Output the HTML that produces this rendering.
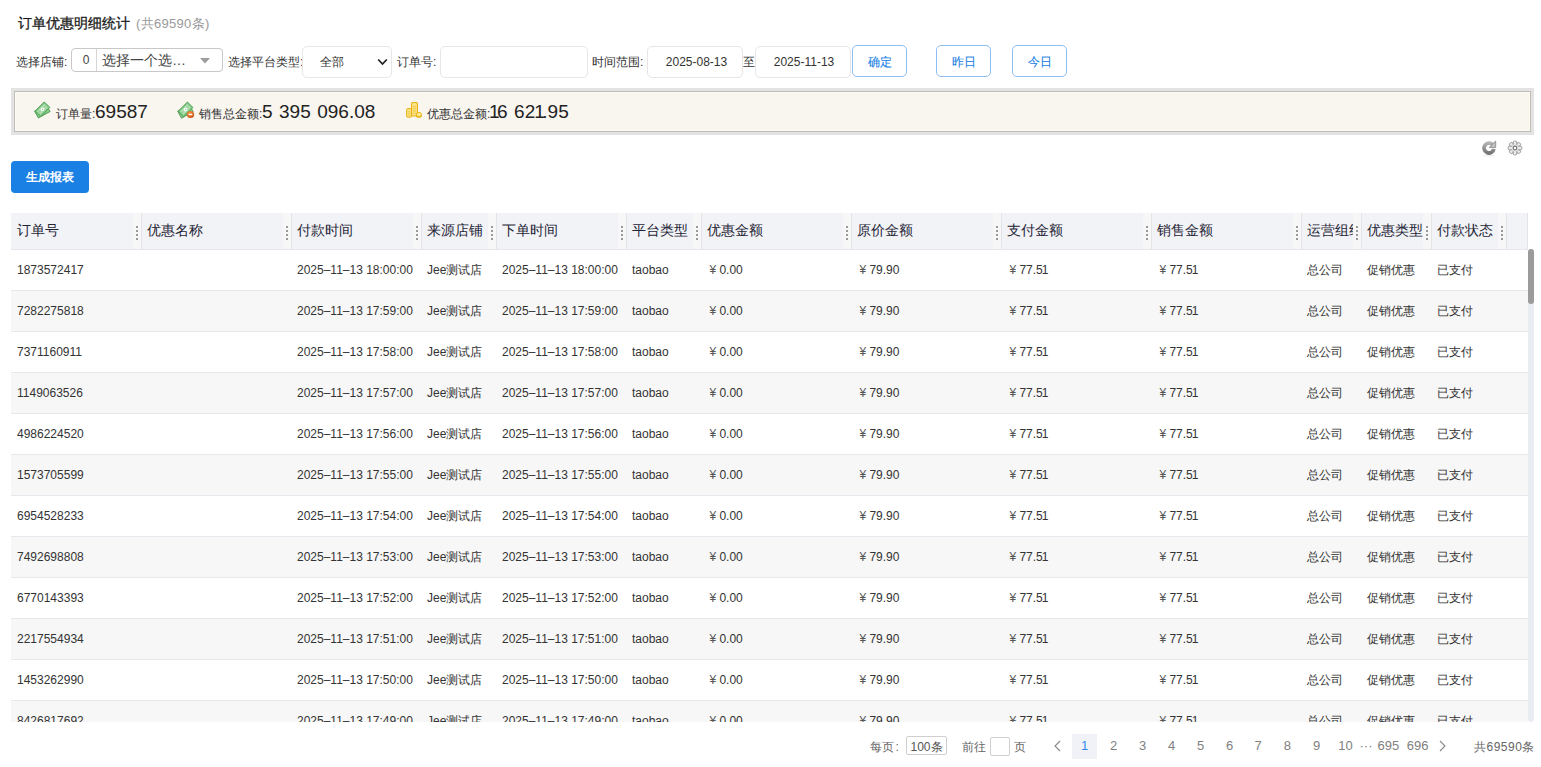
<!DOCTYPE html>
<html><head><meta charset="utf-8">
<style>
*{box-sizing:border-box;margin:0;padding:0}
html,body{width:1541px;height:767px;overflow:hidden;background:#fff}
body{position:relative;font-family:"Liberation Sans",sans-serif;color:#333;font-size:12px}
.a{position:absolute;white-space:nowrap}
.title{left:18px;top:13px;font-size:14px;font-weight:500;color:#1a1a1a;line-height:20px;-webkit-text-stroke:0.3px #1a1a1a}
.title span{font-size:13px;font-weight:normal;color:#999;margin-left:6px;-webkit-text-stroke:0;letter-spacing:0.3px}
.lbl{font-size:12px;color:#333;line-height:16px}
.box{border:1px solid #e6e6e6;border-radius:5px;background:#fff}
.btnb{border:1px solid #8ebdf0;border-radius:5px;background:#fff;color:#1a80e4;text-align:center;font-size:12px;font-weight:500;-webkit-text-stroke:0.1px #1a80e4}
.sum{left:11px;top:88px;width:1523px;height:47px;border:3px solid #e3e3e3}
.sum .i1{position:absolute;left:0;top:0;right:0;bottom:0;border:1px solid #bebcbd}
.sum .i2{position:absolute;left:0;top:0;right:0;bottom:0;border:1px solid #fffaee;background:#f9f5ef}
.sl{font-size:12px;color:#333}
.sv{font-size:19px;color:#222}
.n1{margin-left:-1px;margin-right:-2.5px}

.tbl{background:#fff}
.hd{position:absolute;left:0;top:0;width:1517px;height:37px}
.hc{position:absolute;top:0;height:37px;background:#f2f3f7;border-bottom:1px solid #e4e6eb;border-right:1px solid #e3e4e8;overflow:hidden}
.hc span{position:absolute;top:0;line-height:35px;font-size:14px;color:#1f2536;white-space:nowrap}
.hc i{position:absolute;right:0;top:0;width:8px;height:36px;background:#f7f7f8}
.hc i:before{content:"";position:absolute;left:3px;top:13px;width:2px;height:2px;background:#999;box-shadow:0 4px 0 #999,0 8px 0 #999,0 12px 0 #999}
.rw{position:absolute;left:0;width:1517px;height:41px;border-bottom:1px solid #e6e8ee;background:#fff}
.rw.odd{background:#f7f7f7}
.rw span{position:absolute;top:0;line-height:40px;font-size:12px;color:#333;white-space:nowrap}
.rw b{font-weight:normal;margin-left:2.5px;margin-right:3.2px;color:#555}
.rw s{text-decoration:none;margin-left:-1px}

.pgl{font-size:12px;line-height:16px;color:#666}
.pgn{top:733px;width:30px;text-align:center;font-size:13px;line-height:25px;color:#808080}
</style></head><body>
<div class="a title">订单优惠明细统计<span>(共69590条)</span></div>

<div class="a lbl" style="left:16px;top:54px">选择店铺:</div>
<div class="a" style="left:71px;top:48px;width:152px;height:24px;border:1px solid #c8c8c8;border-radius:4px;background:#fff"></div>

<div class="a lbl" style="left:228px;top:54px">选择平台类型:</div>
<div class="a box" style="left:302px;top:46px;width:90px;height:32px"></div>

<div class="a lbl" style="left:397px;top:54px">订单号:</div>
<div class="a box" style="left:440px;top:46px;width:148px;height:32px"></div>

<div class="a lbl" style="left:592px;top:54px">时间范围:</div>
<div class="a box" style="left:647px;top:46px;width:96px;height:32px"></div>
<div class="a lbl" style="left:743px;top:54px">至</div>
<div class="a box" style="left:755px;top:46px;width:96px;height:32px"></div>
<div class="a btnb" style="left:852px;top:45px;width:55px;height:32px;line-height:32px">确定</div>
<div class="a btnb" style="left:936px;top:45px;width:55px;height:32px;line-height:32px">昨日</div>
<div class="a btnb" style="left:1012px;top:45px;width:55px;height:32px;line-height:32px">今日</div>

<div class="a" style="left:96px;top:49px;width:1px;height:22px;background:#d6d6d6"></div>
<div class="a" style="left:73.5px;top:49px;width:25px;height:24px;line-height:22px;text-align:center;font-size:12px;color:#444">0</div>
<div class="a" style="left:102px;top:50px;font-size:14px;line-height:20px;color:#444">选择一个选…</div>
<svg class="a" style="left:200px;top:57.7px" width="10" height="6" viewBox="0 0 10 6"><path d="M0 0H10L5 5.5Z" fill="#9c9c9c"/></svg>
<div class="a" style="left:320px;top:54px;font-size:12px;line-height:16px;color:#333">全部</div>
<svg class="a" style="left:377px;top:58px" width="11" height="8" viewBox="0 0 11 8"><path d="M1.2 1.5L5.5 6L9.8 1.5" fill="none" stroke="#222" stroke-width="1.8"/></svg>
<div class="a" style="left:648.5px;top:46px;width:96px;height:32px;line-height:32px;text-align:center;font-size:12px;color:#333">2025-08-13</div>
<div class="a" style="left:756px;top:46px;width:96px;height:32px;line-height:32px;text-align:center;font-size:12px;color:#333">2025-11-13</div>

<div class="a sum"><div class="i1"><div class="i2"></div></div></div>

<svg class="a" style="left:33px;top:100px" width="20" height="20" viewBox="0 0 20 20">
<g transform="translate(9.3 11.3) rotate(-29)">
<rect x="-6.6" y="-3.9" width="13.2" height="7.8" fill="#8fcf92" stroke="#52a057" stroke-width="0.9"/>
</g>
<g transform="translate(9.4 9.3) rotate(-45)">
<rect x="-6.6" y="-3.9" width="13.2" height="7.8" fill="#7cc680" stroke="#52a057" stroke-width="0.9"/>
<rect x="-5.2" y="-2.5" width="10.4" height="5" fill="#b2e0b3"/>
<circle cx="0" cy="0" r="1.7" fill="#fff"/><circle cx="0" cy="0" r="0.6" fill="#7cc680"/>
<circle cx="-3.6" cy="0" r="0.5" fill="#5aa35e"/><circle cx="3.6" cy="0" r="0.5" fill="#5aa35e"/>
</g>
</svg>
<div class="a sl" style="left:56px;top:106px;line-height:16px">订单量:</div>
<div class="a sv" style="left:95px;top:101px;line-height:22px">69587</div>

<svg class="a" style="left:175px;top:100px" width="22" height="22" viewBox="0 0 22 22">
<g transform="translate(10.4 11.45) rotate(-29)">
<rect x="-6.6" y="-3.9" width="13.2" height="7.8" fill="#8fcf92" stroke="#52a057" stroke-width="0.9"/>
</g>
<g transform="translate(10.5 9.45) rotate(-45)">
<rect x="-6.6" y="-3.9" width="13.2" height="7.8" fill="#7cc680" stroke="#52a057" stroke-width="0.9"/>
<rect x="-5.2" y="-2.5" width="10.4" height="5" fill="#b2e0b3"/>
<circle cx="0" cy="0" r="1.7" fill="#fff"/><circle cx="0" cy="0" r="0.6" fill="#7cc680"/>
<circle cx="-3.6" cy="0" r="0.5" fill="#5aa35e"/><circle cx="3.6" cy="0" r="0.5" fill="#5aa35e"/>
</g>
<defs><radialGradient id="og" cx="0.4" cy="0.35" r="0.7"><stop offset="0" stop-color="#f7a04a"/><stop offset="1" stop-color="#c9470a"/></radialGradient></defs>
<circle cx="15.5" cy="14.5" r="3.6" fill="url(#og)"/>
<rect x="13.6" y="13.8" width="3.8" height="1.4" fill="#fff"/>
</svg>
<div class="a sl" style="left:199px;top:106px;line-height:16px">销售总金额:</div>
<div class="a sv" style="left:262px;top:101px;line-height:22px;word-spacing:1.2px">5 395 096.08</div>

<svg class="a" style="left:402px;top:99px" width="24" height="24" viewBox="0 0 24 24">
<rect x="4.1" y="9" width="6" height="9.8" rx="2.4" fill="#eab10e"/>
<rect x="5" y="10" width="4.2" height="7.8" rx="1.6" fill="#fde58a"/>
<path d="M5.6 12.8h3M5.6 14.6h3M5.6 16.3h3" stroke="#e9bb2a" stroke-width="0.6"/>
<rect x="9" y="3" width="7" height="14.4" rx="1.6" fill="#eab10e"/>
<rect x="10" y="4.1" width="5" height="12.3" rx="1" fill="#fde58a"/>
<path d="M10.6 7.4h3.8M10.6 9.2h3.8M10.6 11h3.8M10.6 12.8h3.8M10.6 14.6h3.8" stroke="#e9bb2a" stroke-width="0.6"/>
<ellipse cx="16.9" cy="15.9" rx="3" ry="2.9" fill="#eab10e"/>
<ellipse cx="16.9" cy="15.6" rx="2.1" ry="1.8" fill="#fde98d"/>
</svg>
<div class="a sl" style="left:427px;top:106px;line-height:16px">优惠总金额:</div>
<div class="a sv" style="left:490px;top:101px;line-height:22px;word-spacing:1.2px"><span class="n1">1</span>6 62<span class="n1">1</span>.95</div>

<svg class="a" style="left:1479px;top:138px" width="20" height="20" viewBox="0 0 20 20">
<defs><linearGradient id="rg" x1="0" y1="0" x2="0" y2="1"><stop offset="0" stop-color="#b4b4b4"/><stop offset="1" stop-color="#767676"/></linearGradient>
<linearGradient id="rg2" x1="0" y1="0" x2="1" y2="0"><stop offset="0" stop-color="#000" stop-opacity="0"/><stop offset="1" stop-color="#fff" stop-opacity="0.6"/></linearGradient></defs>
<path d="M13.79 6.82A4.95 4.95 0 1 0 14.87 10.86" fill="none" stroke="url(#rg)" stroke-width="3.8"/>
<path d="M16.7 3.1V9.4H10.3Z" fill="#c4c4c4" stroke="#8a8a8a" stroke-width="0.9" stroke-linejoin="round"/>
<ellipse cx="10" cy="17.5" rx="6" ry="0.9" fill="#000" opacity="0.06"/>
</svg>
<svg class="a" style="left:1507px;top:140px" width="16" height="16" viewBox="0 0 16 16">
<g fill="#ebebeb" stroke="#8a8a8a" stroke-width="0.9"><rect x="6.2" y="1.2" width="3.6" height="13.6" rx="1.3" transform="rotate(45 8 8)"/><rect x="6.2" y="1.2" width="3.6" height="13.6" rx="1.3" transform="rotate(135 8 8)"/><rect x="6.2" y="1.2" width="3.6" height="13.6" rx="1.3" transform="rotate(0 8 8)"/><rect x="6.2" y="1.2" width="3.6" height="13.6" rx="1.3" transform="rotate(90 8 8)"/></g>
<circle cx="8" cy="8" r="3.4" fill="#e6e6e6"/>
<circle cx="8" cy="8" r="1.8" fill="#fff" stroke="#747474" stroke-width="1.2"/>
</svg>

<div class="a" style="left:11px;top:161px;width:78px;height:32px;background:#1a80e4;border-radius:4px;color:#fff;font-weight:bold;font-size:12px;text-align:center;line-height:32px">生成报表</div>

<div class="a tbl" style="left:11px;top:213px;width:1517px;height:509px;overflow:hidden">
<div class="hd">
<div class="hc" style="left:0px;width:131px"><span style="left:6px">订单号</span><i></i></div>
<div class="hc" style="left:131px;width:150px"><span style="left:5px">优惠名称</span><i></i></div>
<div class="hc" style="left:281px;width:130px"><span style="left:5px">付款时间</span><i></i></div>
<div class="hc" style="left:411px;width:75px"><span style="left:5px">来源店铺</span><i></i></div>
<div class="hc" style="left:486px;width:130px"><span style="left:5px">下单时间</span><i></i></div>
<div class="hc" style="left:616px;width:75px"><span style="left:5px">平台类型</span><i></i></div>
<div class="hc" style="left:691px;width:150px"><span style="left:5px">优惠金额</span><i></i></div>
<div class="hc" style="left:841px;width:150px"><span style="left:5px">原价金额</span><i></i></div>
<div class="hc" style="left:991px;width:150px"><span style="left:5px">支付金额</span><i></i></div>
<div class="hc" style="left:1141px;width:150px"><span style="left:5px">销售金额</span><i></i></div>
<div class="hc" style="left:1291px;width:60px"><span style="left:5px">运营组织</span><i></i></div>
<div class="hc" style="left:1351px;width:70px"><span style="left:5px">优惠类型</span><i></i></div>
<div class="hc" style="left:1421px;width:75px"><span style="left:5px">付款状态</span><i></i></div>
<div class="hc" style="left:1496px;width:21px"></div>
</div>
<div class="rw" style="top:37px">
<span style="left:6px">1873572417</span>
<span style="left:286px">2025–11–13 18:00:00</span>
<span style="left:416px">Jee测试店</span>
<span style="left:491px">2025–11–13 18:00:00</span>
<span style="left:621px">taobao</span>
<span style="left:696px"><b>¥</b>0.00</span>
<span style="left:846px"><b>¥</b>79.90</span>
<span style="left:996px"><b>¥</b>77.5<s>1</s></span>
<span style="left:1146px"><b>¥</b>77.5<s>1</s></span>
<span style="left:1296px">总公司</span>
<span style="left:1356px">促销优惠</span>
<span style="left:1426px">已支付</span>
</div>
<div class="rw odd" style="top:78px">
<span style="left:6px">7282275818</span>
<span style="left:286px">2025–11–13 17:59:00</span>
<span style="left:416px">Jee测试店</span>
<span style="left:491px">2025–11–13 17:59:00</span>
<span style="left:621px">taobao</span>
<span style="left:696px"><b>¥</b>0.00</span>
<span style="left:846px"><b>¥</b>79.90</span>
<span style="left:996px"><b>¥</b>77.5<s>1</s></span>
<span style="left:1146px"><b>¥</b>77.5<s>1</s></span>
<span style="left:1296px">总公司</span>
<span style="left:1356px">促销优惠</span>
<span style="left:1426px">已支付</span>
</div>
<div class="rw" style="top:119px">
<span style="left:6px">7371160911</span>
<span style="left:286px">2025–11–13 17:58:00</span>
<span style="left:416px">Jee测试店</span>
<span style="left:491px">2025–11–13 17:58:00</span>
<span style="left:621px">taobao</span>
<span style="left:696px"><b>¥</b>0.00</span>
<span style="left:846px"><b>¥</b>79.90</span>
<span style="left:996px"><b>¥</b>77.5<s>1</s></span>
<span style="left:1146px"><b>¥</b>77.5<s>1</s></span>
<span style="left:1296px">总公司</span>
<span style="left:1356px">促销优惠</span>
<span style="left:1426px">已支付</span>
</div>
<div class="rw odd" style="top:160px">
<span style="left:6px">1149063526</span>
<span style="left:286px">2025–11–13 17:57:00</span>
<span style="left:416px">Jee测试店</span>
<span style="left:491px">2025–11–13 17:57:00</span>
<span style="left:621px">taobao</span>
<span style="left:696px"><b>¥</b>0.00</span>
<span style="left:846px"><b>¥</b>79.90</span>
<span style="left:996px"><b>¥</b>77.5<s>1</s></span>
<span style="left:1146px"><b>¥</b>77.5<s>1</s></span>
<span style="left:1296px">总公司</span>
<span style="left:1356px">促销优惠</span>
<span style="left:1426px">已支付</span>
</div>
<div class="rw" style="top:201px">
<span style="left:6px">4986224520</span>
<span style="left:286px">2025–11–13 17:56:00</span>
<span style="left:416px">Jee测试店</span>
<span style="left:491px">2025–11–13 17:56:00</span>
<span style="left:621px">taobao</span>
<span style="left:696px"><b>¥</b>0.00</span>
<span style="left:846px"><b>¥</b>79.90</span>
<span style="left:996px"><b>¥</b>77.5<s>1</s></span>
<span style="left:1146px"><b>¥</b>77.5<s>1</s></span>
<span style="left:1296px">总公司</span>
<span style="left:1356px">促销优惠</span>
<span style="left:1426px">已支付</span>
</div>
<div class="rw odd" style="top:242px">
<span style="left:6px">1573705599</span>
<span style="left:286px">2025–11–13 17:55:00</span>
<span style="left:416px">Jee测试店</span>
<span style="left:491px">2025–11–13 17:55:00</span>
<span style="left:621px">taobao</span>
<span style="left:696px"><b>¥</b>0.00</span>
<span style="left:846px"><b>¥</b>79.90</span>
<span style="left:996px"><b>¥</b>77.5<s>1</s></span>
<span style="left:1146px"><b>¥</b>77.5<s>1</s></span>
<span style="left:1296px">总公司</span>
<span style="left:1356px">促销优惠</span>
<span style="left:1426px">已支付</span>
</div>
<div class="rw" style="top:283px">
<span style="left:6px">6954528233</span>
<span style="left:286px">2025–11–13 17:54:00</span>
<span style="left:416px">Jee测试店</span>
<span style="left:491px">2025–11–13 17:54:00</span>
<span style="left:621px">taobao</span>
<span style="left:696px"><b>¥</b>0.00</span>
<span style="left:846px"><b>¥</b>79.90</span>
<span style="left:996px"><b>¥</b>77.5<s>1</s></span>
<span style="left:1146px"><b>¥</b>77.5<s>1</s></span>
<span style="left:1296px">总公司</span>
<span style="left:1356px">促销优惠</span>
<span style="left:1426px">已支付</span>
</div>
<div class="rw odd" style="top:324px">
<span style="left:6px">7492698808</span>
<span style="left:286px">2025–11–13 17:53:00</span>
<span style="left:416px">Jee测试店</span>
<span style="left:491px">2025–11–13 17:53:00</span>
<span style="left:621px">taobao</span>
<span style="left:696px"><b>¥</b>0.00</span>
<span style="left:846px"><b>¥</b>79.90</span>
<span style="left:996px"><b>¥</b>77.5<s>1</s></span>
<span style="left:1146px"><b>¥</b>77.5<s>1</s></span>
<span style="left:1296px">总公司</span>
<span style="left:1356px">促销优惠</span>
<span style="left:1426px">已支付</span>
</div>
<div class="rw" style="top:365px">
<span style="left:6px">6770143393</span>
<span style="left:286px">2025–11–13 17:52:00</span>
<span style="left:416px">Jee测试店</span>
<span style="left:491px">2025–11–13 17:52:00</span>
<span style="left:621px">taobao</span>
<span style="left:696px"><b>¥</b>0.00</span>
<span style="left:846px"><b>¥</b>79.90</span>
<span style="left:996px"><b>¥</b>77.5<s>1</s></span>
<span style="left:1146px"><b>¥</b>77.5<s>1</s></span>
<span style="left:1296px">总公司</span>
<span style="left:1356px">促销优惠</span>
<span style="left:1426px">已支付</span>
</div>
<div class="rw odd" style="top:406px">
<span style="left:6px">2217554934</span>
<span style="left:286px">2025–11–13 17:51:00</span>
<span style="left:416px">Jee测试店</span>
<span style="left:491px">2025–11–13 17:51:00</span>
<span style="left:621px">taobao</span>
<span style="left:696px"><b>¥</b>0.00</span>
<span style="left:846px"><b>¥</b>79.90</span>
<span style="left:996px"><b>¥</b>77.5<s>1</s></span>
<span style="left:1146px"><b>¥</b>77.5<s>1</s></span>
<span style="left:1296px">总公司</span>
<span style="left:1356px">促销优惠</span>
<span style="left:1426px">已支付</span>
</div>
<div class="rw" style="top:447px">
<span style="left:6px">1453262990</span>
<span style="left:286px">2025–11–13 17:50:00</span>
<span style="left:416px">Jee测试店</span>
<span style="left:491px">2025–11–13 17:50:00</span>
<span style="left:621px">taobao</span>
<span style="left:696px"><b>¥</b>0.00</span>
<span style="left:846px"><b>¥</b>79.90</span>
<span style="left:996px"><b>¥</b>77.5<s>1</s></span>
<span style="left:1146px"><b>¥</b>77.5<s>1</s></span>
<span style="left:1296px">总公司</span>
<span style="left:1356px">促销优惠</span>
<span style="left:1426px">已支付</span>
</div>
<div class="rw odd" style="top:488px">
<span style="left:6px">8426817692</span>
<span style="left:286px">2025–11–13 17:49:00</span>
<span style="left:416px">Jee测试店</span>
<span style="left:491px">2025–11–13 17:49:00</span>
<span style="left:621px">taobao</span>
<span style="left:696px"><b>¥</b>0.00</span>
<span style="left:846px"><b>¥</b>79.90</span>
<span style="left:996px"><b>¥</b>77.5<s>1</s></span>
<span style="left:1146px"><b>¥</b>77.5<s>1</s></span>
<span style="left:1296px">总公司</span>
<span style="left:1356px">促销优惠</span>
<span style="left:1426px">已支付</span>
</div>
</div>
<div class="a" style="left:1528px;top:249px;width:6px;height:473px;background:#e9ecf2;border-radius:3px"></div>
<div class="a" style="left:1528px;top:249px;width:6px;height:55px;background:#9b9b9b;border-radius:3px"></div>
<div class="a pgl" style="left:870px;top:739px">每页<span style="margin-left:1.5px">:</span></div>
<div class="a" style="left:906px;top:736px;width:41px;height:19px;border:1px solid #cfcfcf;border-radius:2px"></div>
<div class="a pgl" style="left:906px;top:739px;width:41px;text-align:center;color:#555">100条</div>
<div class="a pgl" style="left:962px;top:739px">前往</div>
<div class="a" style="left:990px;top:737px;width:20px;height:19px;border:1px solid #cfcfcf;border-radius:2px"></div>
<div class="a pgl" style="left:1014px;top:739px">页</div>
<svg class="a" style="left:1053px;top:740px" width="9" height="12" viewBox="0 0 9 12"><path d="M7 1L2 6L7 11" fill="none" stroke="#888" stroke-width="1.1"/></svg>
<div class="a" style="left:1072px;top:734px;width:25px;height:25px;background:#f0f2f7"></div>
<div class="a pgn" style="left:1069.5px;color:#2d8cf0">1</div>
<div class="a pgn" style="left:1098.7px;color:#808080">2</div>
<div class="a pgn" style="left:1127.5px;color:#808080">3</div>
<div class="a pgn" style="left:1156.5px;color:#808080">4</div>
<div class="a pgn" style="left:1185.7px;color:#808080">5</div>
<div class="a pgn" style="left:1214.7px;color:#808080">6</div>
<div class="a pgn" style="left:1243.2px;color:#808080">7</div>
<div class="a pgn" style="left:1272.3px;color:#808080">8</div>
<div class="a pgn" style="left:1301.6px;color:#808080">9</div>
<div class="a pgn" style="left:1330.5px;color:#808080">10</div>
<div class="a pgn" style="left:1351px">···</div>
<div class="a pgn" style="left:1373.4px">695</div>
<div class="a pgn" style="left:1402.7px">696</div>
<svg class="a" style="left:1438px;top:740px" width="9" height="12" viewBox="0 0 9 12"><path d="M2 1L7 6L2 11" fill="none" stroke="#888" stroke-width="1.1"/></svg>
<div class="a pgl" style="left:1474px;top:739px;letter-spacing:0.5px">共69590条</div>
</body></html>
